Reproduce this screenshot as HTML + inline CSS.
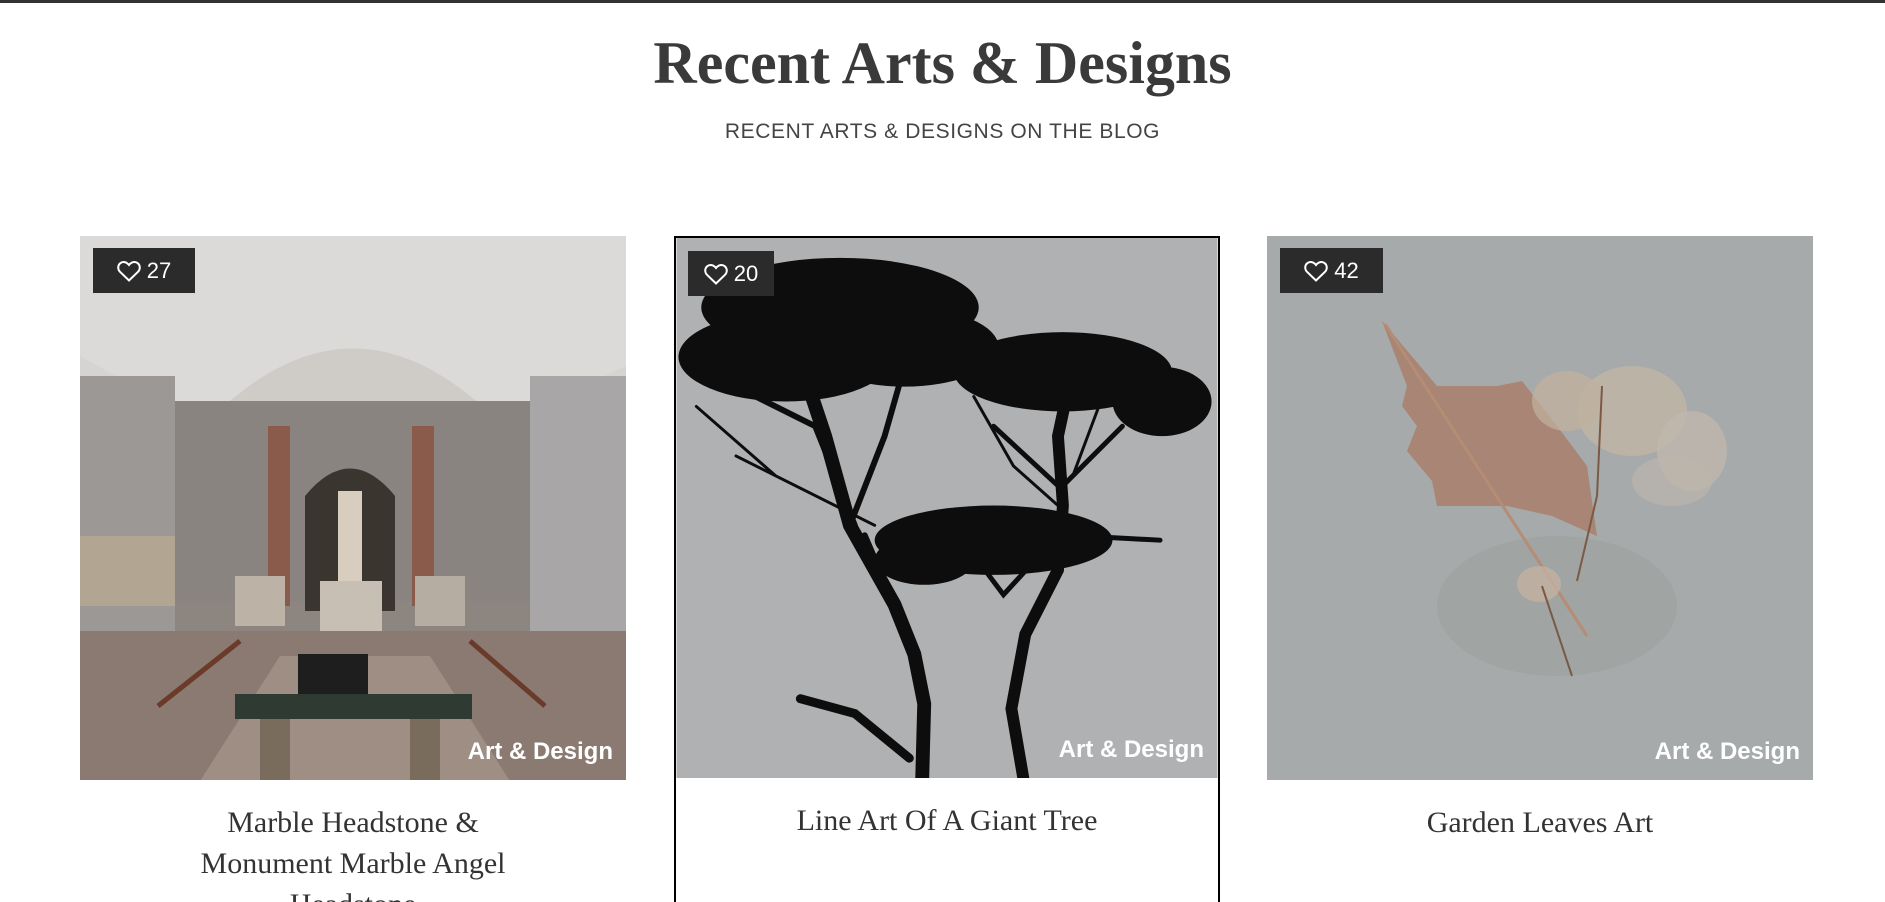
<!DOCTYPE html>
<html style="height:902px;overflow:hidden"><head><meta charset="utf-8"><style>
*{margin:0;padding:0;box-sizing:border-box}
html,body{width:1885px;height:902px;overflow:hidden}
body{background:#fff;font-family:"Liberation Sans",sans-serif;position:relative}
.bar{position:absolute;left:0;top:0;width:1885px;height:3px;background:#333}
h1{position:absolute;top:28px;left:0;width:1885px;text-align:center;font-family:"Liberation Serif",serif;font-weight:bold;font-size:60px;color:#3a3a3a;line-height:70px}
.sub{position:absolute;top:118px;left:0;width:1885px;text-align:center;font-size:21px;color:#444;line-height:28px;letter-spacing:.6px}
.card{position:absolute;top:236px;width:546px;height:666px;overflow:hidden}
.img{position:relative;width:546px;height:544px;overflow:hidden}
.img>svg{position:absolute;left:0;top:0}
.badge{position:absolute;left:13px;top:12px;width:102px;height:45px;background:#2b2b2b;color:#fff;font-size:22px;display:flex;align-items:center;justify-content:center;gap:6px}
.badge svg{display:block}
.cat{position:absolute;right:13px;bottom:14px;color:#fff;font-weight:bold;font-size:24px}
.t{font-family:"Liberation Serif",serif;font-size:30px;color:#333;text-align:center;line-height:41px;margin:22px auto 0;width:360px}
</style></head><body>
<div class="bar"></div>
<h1>Recent Arts &amp; Designs</h1>
<div class="sub">RECENT ARTS &amp; DESIGNS ON THE BLOG</div>

<div class="card" style="left:80px">
<div class="img">
<svg width="546" height="544" viewBox="0 0 546 544">
<rect width="546" height="544" fill="#8c8580"/>
<rect width="546" height="170" fill="#d6d4d2"/>
<path d="M0 0H546V130L460 170H90L0 120Z" fill="#dcdad8"/>
<path d="M150 165Q273 60 396 165Z" fill="#cfcbc7"/>
<rect x="0" y="140" width="95" height="260" fill="#9c9896"/>
<rect x="450" y="140" width="96" height="260" fill="#a8a6a6"/>
<rect x="95" y="165" width="355" height="200" fill="#8a8480"/>
<rect x="188" y="190" width="22" height="180" fill="#8a5a4a"/>
<rect x="332" y="190" width="22" height="180" fill="#8a5a4a"/>
<path d="M225 375V260Q270 205 315 260V375Z" fill="#3b3530"/>
<rect x="258" y="255" width="24" height="90" fill="#d8cdbf"/>
<rect x="240" y="345" width="62" height="50" fill="#c8bfb4"/>
<rect x="155" y="340" width="50" height="50" fill="#bdb2a6"/>
<rect x="335" y="340" width="50" height="50" fill="#b5aca2"/>
<rect x="0" y="300" width="95" height="70" fill="#b2a592"/>
<rect x="0" y="395" width="546" height="150" fill="#8a7a72"/>
<path d="M120 545L200 420H350L430 545Z" fill="#9e8e84"/>
<rect x="155" y="458" width="237" height="25" fill="#2f3a33"/>
<rect x="218" y="418" width="70" height="40" fill="#1e1e1e"/>
<rect x="180" y="483" width="30" height="62" fill="#7a6c5c"/>
<rect x="330" y="483" width="30" height="62" fill="#7a6c5c"/>
<path d="M78 470L160 405M390 405L465 470" stroke="#6a3a2a" stroke-width="5"/>
</svg>
<div class="badge"><svg width="24" height="22" viewBox="0 0 24 22"><path d="M12 20.5L3 11.8C0.5 9.3 0.7 5.3 3.3 3.2 5.8 1.2 9.5 1.8 12 5 14.5 1.8 18.2 1.2 20.7 3.2 23.3 5.3 23.5 9.3 21 11.8Z" fill="none" stroke="#fff" stroke-width="2"/></svg>27</div>
<div class="cat">Art &amp; Design</div>
</div>
<div class="t">Marble Headstone &amp; Monument Marble Angel Headstone</div>
</div>

<div class="card" style="left:674px;border:2px solid #000;border-bottom:none;height:666px">
<div class="img" style="width:542px;height:540px">
<svg width="542" height="540" viewBox="0 0 546 545">
<rect width="546" height="545" fill="#b0b1b2"/>
<g fill="#0d0d0d">
<ellipse cx="165" cy="70" rx="140" ry="50"/>
<ellipse cx="110" cy="120" rx="108" ry="45"/>
<ellipse cx="230" cy="110" rx="95" ry="40"/>
<ellipse cx="390" cy="135" rx="110" ry="40"/>
<ellipse cx="490" cy="165" rx="50" ry="35"/>
<ellipse cx="320" cy="305" rx="120" ry="35"/>
<ellipse cx="250" cy="325" rx="50" ry="25"/>
</g>
<g fill="none" stroke="#0d0d0d" stroke-linecap="round">
<path d="M248 545L250 470 240 420 220 370 175 290 150 200 130 140" stroke-width="14"/>
<path d="M180 290L140 190 60 150M175 290L210 200 230 130M220 370L190 300" stroke-width="6"/>
<path d="M350 545L338 475 352 400 385 335 390 270 385 200 400 130" stroke-width="12"/>
<path d="M385 300L330 360 300 320M390 250L450 190M395 300L488 305M385 250L320 190" stroke-width="5"/>
<path d="M125 465L180 480 235 525" stroke-width="9"/>
<path d="M60 220L120 250 200 290M20 170L100 240M300 160L340 230 385 270M430 160L400 240" stroke-width="3"/>
</g>
</svg>
<div class="badge" style="left:12px;top:13px;width:86px;height:45px">
<svg width="24" height="22" viewBox="0 0 24 22"><path d="M12 20.5L3 11.8C0.5 9.3 0.7 5.3 3.3 3.2 5.8 1.2 9.5 1.8 12 5 14.5 1.8 18.2 1.2 20.7 3.2 23.3 5.3 23.5 9.3 21 11.8Z" fill="none" stroke="#fff" stroke-width="2"/></svg>20</div>
<div class="cat" style="right:14px;bottom:14px">Art &amp; Design</div>
</div>
<div class="t" style="margin-top:22px">Line Art Of A Giant Tree</div>
</div>

<div class="card" style="left:1267px">
<div class="img">
<svg width="546" height="544" viewBox="0 0 546 544">
<rect width="546" height="544" fill="#a6aaab"/>
<ellipse cx="290" cy="370" rx="120" ry="70" fill="#9ea1a0" opacity=".7"/>
<path d="M115 85L170 150 230 150 255 145 290 190 320 230 330 300 285 280 240 270 170 270 165 245 140 215 150 190 135 170 140 150Z" fill="#a8816e" opacity=".9"/>
<path d="M118 88L320 400" stroke="#b58c74" stroke-width="3"/>
<ellipse cx="365" cy="175" rx="55" ry="45" fill="#c2b5a6" opacity=".8"/>
<ellipse cx="300" cy="165" rx="35" ry="30" fill="#c0b09c" opacity=".75"/>
<ellipse cx="425" cy="215" rx="35" ry="40" fill="#c0b7ad" opacity=".75"/>
<ellipse cx="405" cy="245" rx="40" ry="25" fill="#bdb5ac" opacity=".65"/>
<ellipse cx="272" cy="348" rx="22" ry="18" fill="#c3b2a0" opacity=".8"/>
<path d="M335 150L330 260 310 345M275 350L305 440" stroke="#7a5a44" stroke-width="2" fill="none"/>
</svg>
<div class="badge" style="width:103px"><svg width="24" height="22" viewBox="0 0 24 22"><path d="M12 20.5L3 11.8C0.5 9.3 0.7 5.3 3.3 3.2 5.8 1.2 9.5 1.8 12 5 14.5 1.8 18.2 1.2 20.7 3.2 23.3 5.3 23.5 9.3 21 11.8Z" fill="none" stroke="#fff" stroke-width="2"/></svg>42</div>
<div class="cat">Art &amp; Design</div>
</div>
<div class="t">Garden Leaves Art</div>
</div>
</body></html>
